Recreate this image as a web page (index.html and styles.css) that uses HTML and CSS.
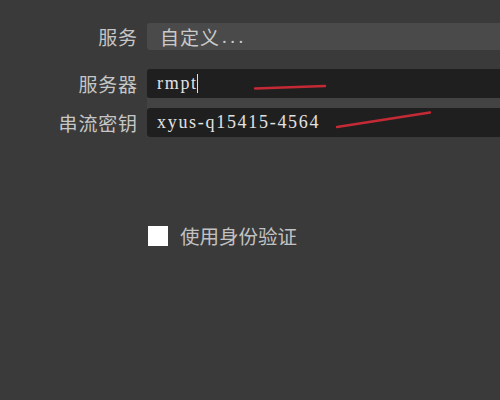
FILE: index.html
```html
<!DOCTYPE html>
<html lang="zh-CN">
<head>
<meta charset="utf-8">
<link rel="stylesheet" href="styles.css">
</head>
<body>
<div class="page">
  <div class="form">
    <div class="label row1">服务</div>
    <div class="select row1">自定义<span class="dots">...</span></div>
    <div class="label row2">服务器</div>
    <div class="input row2"><span class="val">rmpt</span><span class="caret"></span></div>
    <div class="label row3">串流密钥</div>
    <div class="band row3"><div class="input"><span class="val">xyus-q15415-4564</span></div></div>
  </div>
  <div class="check">
    <span class="box"></span>
    <span class="check-label">使用身份验证</span>
  </div>
  <svg class="marks" width="500" height="400" viewBox="0 0 500 400">
    <path d="M255 88.5 L325 86" stroke="#c42a35" stroke-width="2.4" stroke-linecap="round" fill="none"/>
    <path d="M337 127 L430 112.5" stroke="#c42a35" stroke-width="2.4" stroke-linecap="round" fill="none"/>
  </svg>
</div>
</body>
</html>
```
FILE: styles.css
```css
html, body {
  margin: 0;
  padding: 0;
  background: #3a3a3a;
}
.page {
  position: relative;
  width: 500px;
  height: 400px;
  overflow: hidden;
  font-family: "Noto Sans CJK SC", "Noto Sans", sans-serif;
}
.form {
  display: grid;
  grid-template-columns: 137px 1fr;
  column-gap: 10px;
  padding-top: 23px;
}
.label {
  box-sizing: border-box;
  color: #c6c6c6;
  font-size: 19px;
  letter-spacing: 0.8px;
  margin-right: -0.8px;
  display: flex;
  align-items: center;
  justify-content: flex-end;
}
.row1 { height: 27px; }
.row2 { height: 29px; margin-top: 19px; }
.row3 { height: 39px; }
.label.row3 { padding-top: 10px; }
.select {
  background: #4a4a4a;
  border-radius: 3px 0 0 3px;
  color: #cacaca;
  font-size: 19px;
  padding-left: 13px;
  display: flex;
  align-items: center;
  letter-spacing: 1px;
}
.dots {
  font-family: "Liberation Serif", serif;
  letter-spacing: 3.5px;
  margin-left: 2px;
}
.input {
  box-sizing: border-box;
  background: #1f1f1f;
  border-radius: 3px 0 0 3px;
  height: 29px;
  display: flex;
  align-items: center;
  padding-left: 10px;
  font-family: "Liberation Serif", serif;
  font-size: 18px;
  letter-spacing: 1.7px;
  color: #e2e2e2;
}
.band {
  box-sizing: border-box;
  background: #434343;
  padding-top: 10px;
}
.caret {
  display: inline-block;
  width: 1px;
  height: 19px;
  background: #e0e0e0;
  margin-left: -0.5px;
}
.check {
  display: flex;
  align-items: center;
  margin-top: 88px;
  padding-left: 148px;
  gap: 12px;
}
.box {
  width: 20px;
  height: 20px;
  background: #ffffff;
}
.check-label {
  color: #c2c2c2;
  font-size: 19.5px;
  line-height: 22px;
}
.marks {
  position: absolute;
  left: 0;
  top: 0;
  pointer-events: none;
}
```
